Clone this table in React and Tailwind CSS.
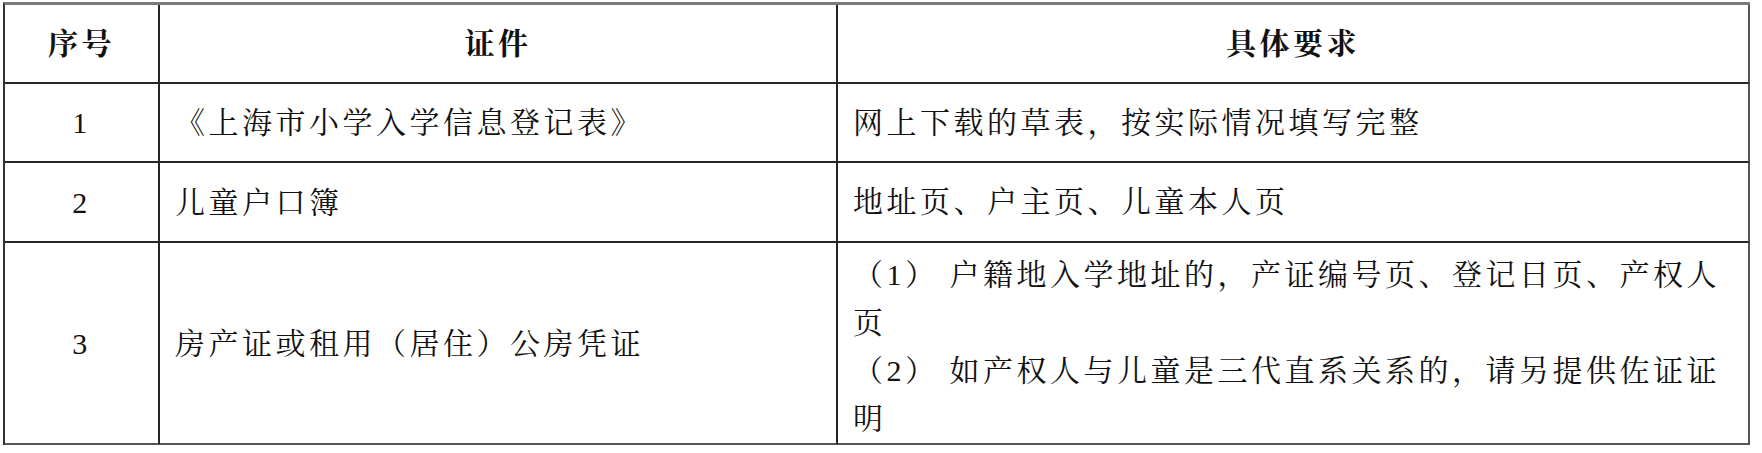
const font = {
  fontFamily:
    '"Liberation Serif", "Noto Serif CJK SC", "Noto Sans CJK SC", serif',
};

const rows = [
  {
    no: "1",
    doc: "《上海市小学入学信息登记表》",
    req: ["网上下载的草表，按实际情况填写完整"],
  },
  {
    no: "2",
    doc: "儿童户口簿",
    req: ["地址页、户主页、儿童本人页"],
  },
  {
    no: "3",
    doc: "房产证或租用（居住）公房凭证",
    req: [
      "（1） 户籍地入学地址的，产证编号页、登记日页、产权人",
      "页",
      "（2） 如产权人与儿童是三代直系关系的，请另提供佐证证",
      "明",
    ],
  },
];

const cell = "flex items-center border-r-2 border-b-2 border-[#262626]";

export default function App() {
  return (
    <div className="min-h-screen bg-white pt-[2px] pl-[3px]" style={font}>
      <div className="grid w-[1747px] grid-cols-[155px_678px_912px] grid-rows-[79px_79px_80px_202px] border-l-2 border-t-[3px] border-l-[#333] border-t-[#7a7a7a] text-[30px] tracking-[3.5px] text-[#111]">
        {/* Header */}
        <div className={`${cell} justify-center font-bold`}>序号</div>
        <div className={`${cell} justify-center font-bold`}>证件</div>
        <div className={`${cell} justify-center font-bold border-r-[#555]`}>具体要求</div>

        {rows.map((r, i) => {
          const last = i === rows.length - 1;
          return (
            <div key={r.no} className="contents">
              <div className={`${cell} justify-center ${last ? "border-b-[#555]" : ""}`}>
                {r.no}
              </div>
              <div className={`${cell} pl-[15px] ${last ? "border-b-[#555]" : ""}`}>
                {r.doc}
              </div>
              <div
                className={`${cell} pl-[15px] border-r-[#555] ${
                  last ? "items-start border-b-[#555] pt-[8px]" : ""
                }`}
              >
                <div className="leading-[48px]">
                  {r.req.map((line, j) => (
                    <div key={j} className="whitespace-pre">
                      {line}
                    </div>
                  ))}
                </div>
              </div>
            </div>
          );
        })}
      </div>
    </div>
  );
}
